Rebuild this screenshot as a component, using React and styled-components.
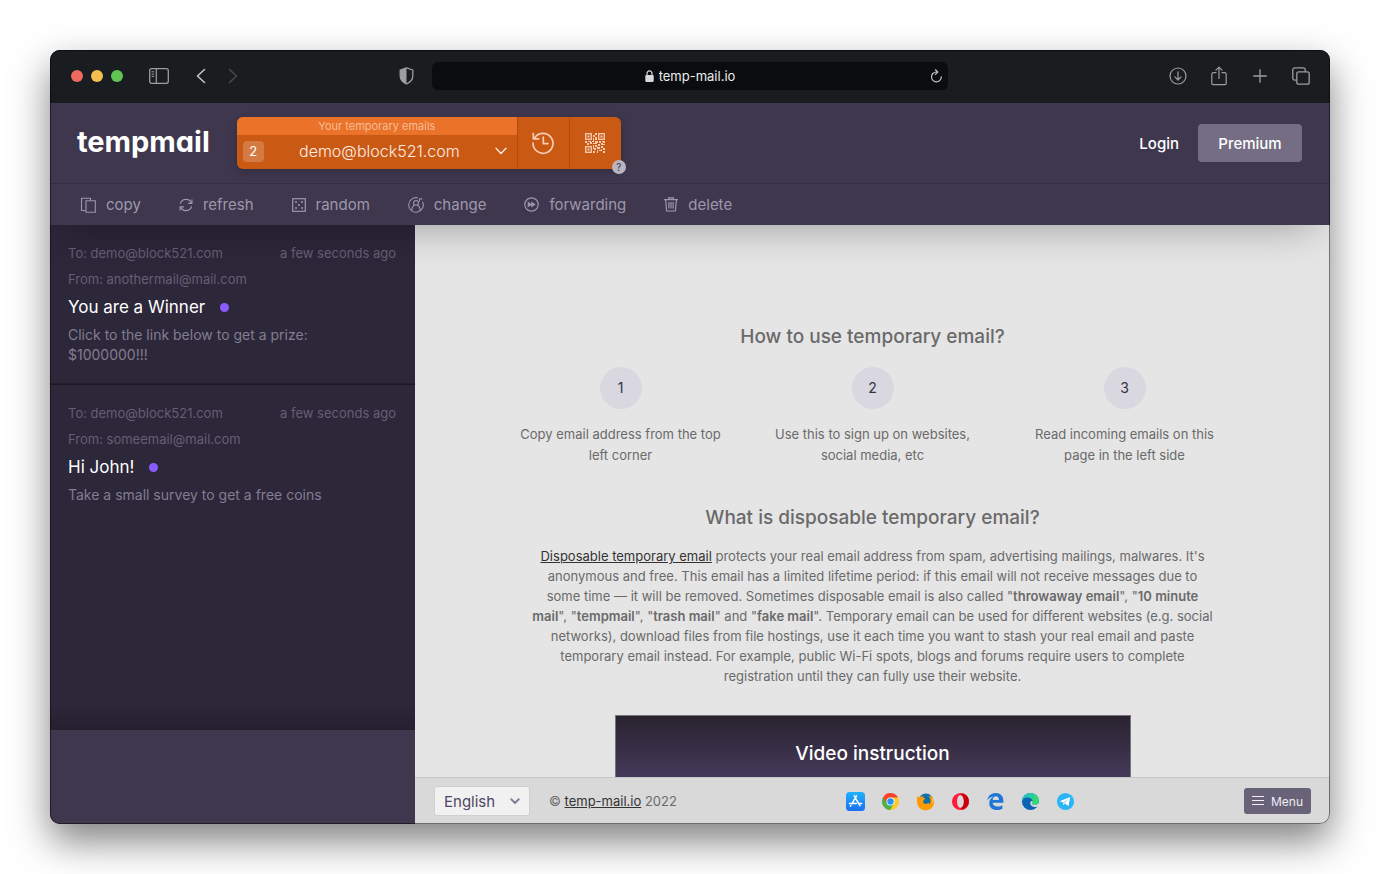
import React, { useState } from "react";
import styled, { createGlobalStyle, css } from "styled-components";

const BAR = "#191d1f";
const PURPLE = "#3e374e";
const DARK = "#2c2739";
const ORANGE = "#ca5914";
const ORANGE_LIGHT = "#ea7229";
const MUTED = "#9d97ac";
const TEXT = "#6a6a6a";

const mails = [
  {
    id: 1,
    to: "demo@block521.com",
    from: "anothermail@mail.com",
    date: "a few seconds ago",
    subject: "You are a Winner",
    body: "Click to the link below to get a prize: $1000000!!!",
  },
  {
    id: 2,
    to: "demo@block521.com",
    from: "someemail@mail.com",
    date: "a few seconds ago",
    subject: "Hi John!",
    body: "Take a small survey to get a free coins",
  },
];

const steps = [
  "Copy email address from the top left corner",
  "Use this to sign up on websites, social media, etc",
  "Read incoming emails on this page in the left side",
];

/* ---------- icons ---------- */

const SidebarIcon = () => (
  <svg width="20" height="16" viewBox="0 0 20 16" fill="none" stroke="currentColor">
    <rect x="0.7" y="0.7" width="18.6" height="14.6" rx="2" strokeWidth="1.3" />
    <path d="M7.3 1v14" strokeWidth="1.2" />
    <path d="M2.6 3.8h2.6M2.6 6.1h2.6M2.6 8.4h2.6" strokeWidth="1" />
  </svg>
);

const ChevronIcon = ({ flip }) => (
  <svg width="10" height="16" viewBox="0 0 10 16" fill="none" stroke="currentColor" strokeWidth="1.6" strokeLinecap="round" strokeLinejoin="round">
    <path d={flip ? "M1.5 1.5 8.5 8l-7 6.5" : "M8.5 1.5 1.5 8l7 6.5"} />
  </svg>
);

const ShieldIcon = () => (
  <svg width="15" height="18" viewBox="0 0 15 18">
    <path d="M7.5.9 1.2 3v6c0 3.6 2.6 6.2 6.3 8 3.7-1.8 6.3-4.4 6.3-8V3L7.5.9Z" fill="none" stroke="currentColor" strokeWidth="1.3" strokeLinejoin="round" />
    <path d="M7.5.9 1.2 3v6c0 3.6 2.6 6.2 6.3 8Z" fill="currentColor" />
  </svg>
);

const LockIcon = () => (
  <svg width="9" height="12" viewBox="0 0 9 12">
    <rect x="0.3" y="5" width="8.4" height="7" rx="1.2" fill="#d6d8d9" />
    <path d="M2 5.3V3.4a2.5 2.6 0 0 1 5 0v1.9" fill="none" stroke="#d6d8d9" strokeWidth="1.2" />
  </svg>
);

const ReloadIcon = () => (
  <svg width="13" height="14" viewBox="0 0 13 14" fill="none" stroke="currentColor" strokeWidth="1.2" strokeLinecap="round" strokeLinejoin="round">
    <path d="M7 3H6.3A4.9 4.9 0 1 0 11.3 7.9" />
    <path d="M5.4.8 7.8 3 5.4 5.4" />
  </svg>
);

const DownloadIcon = () => (
  <svg width="18" height="18" viewBox="0 0 18 18" fill="none" stroke="currentColor" strokeWidth="1.2" strokeLinecap="round" strokeLinejoin="round">
    <circle cx="9" cy="9" r="8" />
    <path d="M9 4.8v8M5.9 9.9 9 13l3.1-3.1" />
  </svg>
);

const ShareIcon = () => (
  <svg width="16" height="20" viewBox="0 0 16 20" fill="none" stroke="currentColor" strokeWidth="1.2" strokeLinecap="round" strokeLinejoin="round">
    <path d="M5 6.7H2.2A1.4 1.4 0 0 0 .8 8.1v9.2a1.4 1.4 0 0 0 1.4 1.4h11.6a1.4 1.4 0 0 0 1.4-1.4V8.1a1.4 1.4 0 0 0-1.4-1.4H11" />
    <path d="M8 12.5V1.2M4.9 4.2 8 1.1l3.1 3.1" />
  </svg>
);

const PlusIcon = () => (
  <svg width="14" height="14" viewBox="0 0 14 14" stroke="currentColor" strokeWidth="1.3" strokeLinecap="round">
    <path d="M7 .7v12.6M.7 7h12.6" />
  </svg>
);

const TabsIcon = () => (
  <svg width="18" height="18" viewBox="0 0 18 18" fill="none" stroke="currentColor" strokeWidth="1.3">
    <rect x="4.8" y="4.8" width="12.4" height="12.4" rx="2" />
    <path d="M4.5 13.2H2.8a2 2 0 0 1-2-2V2.8a2 2 0 0 1 2-2h8.4a2 2 0 0 1 2 2v1.7" />
  </svg>
);

const ArrowDownIcon = () => (
  <svg width="12" height="8" viewBox="0 0 12 8" fill="none" stroke="currentColor" strokeWidth="1.3" strokeLinecap="round" strokeLinejoin="round">
    <path d="M1 1.3 6 6.5l5-5.2" />
  </svg>
);

const SmallArrowIcon = () => (
  <svg width="10" height="7" viewBox="0 0 10 7" fill="none" stroke="currentColor" strokeWidth="2" strokeLinecap="round" strokeLinejoin="round">
    <path d="M1.3 1.3 5 5l3.7-3.7" />
  </svg>
);

const HistoryIcon = () => (
  <svg width="24" height="24" viewBox="0 0 24 24" fill="none" stroke="currentColor" strokeWidth="1.7" strokeLinecap="round" strokeLinejoin="round">
    <path d="M3.4 7.2A10 10 0 1 1 2 12.2" />
    <path d="M2.3 2.4v5.4h5.4" />
    <path d="M12.3 6v6.6h4.6" />
  </svg>
);

const QrIcon = () => (
  <svg width="20" height="20" viewBox="0 0 20 20">
    <g fill="none" stroke="currentColor" strokeWidth="1.3">
      <rect x="0.7" y="0.7" width="5.6" height="5.6" />
      <rect x="13.7" y="0.7" width="5.6" height="5.6" />
      <rect x="0.7" y="13.7" width="5.6" height="5.6" />
    </g>
    <path
      fill="currentColor"
      d="M2.5 2.5h2v2h-2zM15.5 2.5h2v2h-2zM2.5 15.5h2v2h-2zM10 0h2v2h-2zM8 2h2v2H8zM10 4h2v3h-2zM8 5h1v3H8zM0 8h2v2H0zM3 8h3v1H3zM5 9h2v2H5zM2 10h2v2H2zM7 8h2v1H7zM8 10h4v1H8zM10 8h3v2h-3zM14 8h2v2h-2zM17 8h3v1h-3zM16 10h2v2h-2zM18 9h2v1h-2zM13 11h2v2h-2zM10 12h2v2h-2zM8 12h1v4H8zM9 15h2v2H9zM8 18h2v2H8zM12 14h3v2h-3zM16 13h2v2h-2zM18 15h2v2h-2zM14 17h2v1h-2zM12 17h1v3h-1zM16 16h1v2h-1zM18 18h2v2h-2zM18 11h2v1h-2z"
    />
  </svg>
);

const CopyIcon = () => (
  <svg width="16" height="16" viewBox="0 0 16 16" fill="none" stroke="currentColor" strokeWidth="1.1">
    <path d="M5.5 13.5H1.5V1.2h9v2.3" />
    <path d="M6 3.8h9.3v11.4H6Z" />
  </svg>
);

const RefreshIcon = () => (
  <svg width="14" height="14" viewBox="0 0 14 14" fill="none" stroke="currentColor" strokeWidth="1.2" strokeLinejoin="round">
    <path d="M1.5 5.6A5.6 5.2 0 0 1 12.3 5" />
    <path d="M12.9 1.5v3.8H9" />
    <path d="M12.5 8.4A5.6 5.2 0 0 1 1.7 9" />
    <path d="M1.1 12.6V8.8H5" />
  </svg>
);

const DiceIcon = () => (
  <svg width="14" height="14" viewBox="0 0 14 14">
    <rect x="0.7" y="0.7" width="12.6" height="12.6" fill="none" stroke="currentColor" strokeWidth="1.2" />
    <g fill="currentColor">
      <circle cx="4" cy="4" r="1" />
      <circle cx="10" cy="4" r="1" />
      <circle cx="7" cy="7" r="1" />
      <circle cx="4" cy="10" r="1" />
      <circle cx="10" cy="10" r="1" />
    </g>
  </svg>
);

const ChangeIcon = () => (
  <svg width="16" height="16" viewBox="0 0 16 16" fill="none" stroke="currentColor" strokeWidth="1.1">
    <path d="M9.8.9A7.3 7.3 0 1 0 14.5 4.7" />
    <path d="M11.3 4.6l.3-2.8 2.9.2" />
    <circle cx="8" cy="5.9" r="2.4" />
    <path d="M3.8 13.5c.2-3 1.1-4.8 2.7-5.6M12.2 13.5c-.2-3-1.1-4.8-2.7-5.6" />
  </svg>
);

const ForwardIcon = () => (
  <svg width="15" height="15" viewBox="0 0 15 15">
    <circle cx="7.5" cy="7.5" r="6.7" fill="none" stroke="currentColor" strokeWidth="1.2" />
    <path d="M3.7 4.4 7.2 7V4.4l4.5 3.1-4.5 3.1V8l-3.5 2.6Z" fill="currentColor" />
  </svg>
);

const TrashIcon = () => (
  <svg width="14" height="15" viewBox="0 0 14 15" fill="none" stroke="currentColor" strokeWidth="1.2">
    <path d="M0 2.6h14M4.6 2.4V.8h4.8v1.6" />
    <path d="M1.6 2.8 2.6 14h8.8l1-11.2" />
    <path d="M4.9 5v6.5M7 5v6.5M9.1 5v6.5" />
  </svg>
);

const MenuIcon = () => (
  <svg width="12" height="10" viewBox="0 0 12 10" stroke="currentColor" strokeWidth="1">
    <path d="M0 .5h12M0 4.5h12M0 8.5h12" />
  </svg>
);

const AppStoreIcon = () => (
  <svg width="19" height="19" viewBox="0 0 19 19">
    <defs>
      <linearGradient id="store" x1="0" y1="0" x2="0" y2="1">
        <stop offset="0" stopColor="#1fb1fb" />
        <stop offset="1" stopColor="#1d6ff2" />
      </linearGradient>
    </defs>
    <rect width="19" height="19" rx="3.5" fill="url(#store)" />
    <g stroke="#fff" strokeWidth="1.5" strokeLinecap="round">
      <path d="M10.5 3.8 5.8 11.8M8.3 3.8l5.6 9.9M3.4 11.5h7M13 11.5h2.6M4.8 13.6l-.3.6" />
    </g>
  </svg>
);

const ChromeIcon = () => (
  <svg width="19" height="19" viewBox="0 0 20 20">
    <circle cx="10" cy="10" r="9" fill="#ffc926" />
    <path d="M10 10 2.2 5.5A9 9 0 0 0 9.5 19l4.3-7Z" fill="#4caf50" />
    <path d="M2.2 5.5A9 9 0 0 1 17.9 5.8H10L6.2 12.2Z" fill="#f4432f" />
    <circle cx="10" cy="10" r="4.3" fill="#fff" />
    <circle cx="10" cy="10" r="3.4" fill="#2196f3" />
  </svg>
);

const FirefoxIcon = () => (
  <svg width="19" height="19" viewBox="0 0 20 20">
    <circle cx="10.5" cy="9.5" r="8" fill="#0d6fae" />
    <path d="M1.6 4.3c.6.3 1 .8 1.2 1.2C4 4.8 5 4.7 6 5.1c.6-.9 1.4-1.3 2.2-1.4-.6.8-.8 1.5-.6 2.1.5.8 1.9.6 2 1-.1.9-1.3 1.1-1.7 1.8.2 1.2-.2 1.7-.5 2.3 1 1.500 2.800 2.100 4.500 1.200 1.400-.8 2.200-.3 2.300.4-.5 1.400-2.200 2-3.700 1.900 3.600.3 5.600-3.200 4.600-6.500-.4-1.800-1.200-3.200-2.400-4.300 3.200.7 6.400 3.500 6.400 7.600A9 9 0 0 1 1.400 12.500C.7 9.700.9 6.800 1.600 4.300Z" fill="#ff9a05" />
    <path d="M15 3.300c2.600 2.500 3.100 6.400 1.200 9.400 1.600-.8 2.300-2.300 2.400-4-.6-2.600-1.900-4.400-3.600-5.400Z" fill="#ffd54f" />
  </svg>
);

const OperaIcon = () => (
  <svg width="19" height="19" viewBox="0 0 20 20">
    <path fillRule="evenodd" d="M10 1a9 9 0 1 0 0 18 9 9 0 0 0 0-18Zm0 2.2c2 0 3.6 3 3.6 6.8s-1.6 6.8-3.6 6.8S6.4 13.8 6.4 10 8 3.2 10 3.2Z" fill="#ff1b3c" />
    <path d="M10 3.2c.9-1.300 2-1.700 3-1.600a9 9 0 0 1 0 16.800c-1 .1-2.100-.3-3-1.600 2 0 3.600-3 3.600-6.800S12 3.200 10 3.200Z" fill="#c9000b" />
  </svg>
);

const EdgeLegacyIcon = () => (
  <svg width="19" height="19" viewBox="0 0 20 20">
    <path d="M1.3 9C2 4 5.6 1 10.3 1c5 0 8 3.5 8 8.2v2.1H7c.2 2.7 2.5 4 5.2 4 2 0 3.7-.5 5-1.3v3.6c-1.500.9-3.500 1.400-5.800 1.400-4.800 0-8-2.700-8-7.200 0-3.100 1.700-5.700 4.800-7C4.800 5.100 2.700 6.600 1.300 9Zm5.800-.7h6.500c0-2.400-1.100-3.700-3.100-3.700-2 0-3.200 1.500-3.400 3.700Z" fill="#1f75d8" />
  </svg>
);

const EdgeIcon = () => (
  <svg width="19" height="19" viewBox="0 0 20 20">
    <defs>
      <linearGradient id="edge" x1="0" y1="0" x2="1" y2="0.4">
        <stop offset="0" stopColor="#1cb4e0" />
        <stop offset="1" stopColor="#33dd6d" />
      </linearGradient>
    </defs>
    <circle cx="10" cy="10" r="9" fill="#0a63b4" />
    <path d="M1 9.5C1.3 4.6 5 1 10 1c5.3 0 9 3.9 9 8 0 3-2.1 4.5-4.6 4.5-2.1 0-3.4-.8-3-1.700.7-.7 1-1.400.9-2.500C12 7.200 9.600 5.700 7 5.700 4 5.700 2 7.200 1 9.500Z" fill="url(#edge)" />
    <path d="M12.300 9.800c.1.900-.2 1.500-.9 2.100-.4.900.9 1.600 3 1.600 1.900 0 3.500-.8 4.300-2.200L20 15l-2.300.2c-1.700.7-4.200 1-6-.1-1.700-1-2.400-2.900-1.800-4.500.5-1 2.200-1.500 2.400-.8Z" fill="#d9d9d9" />
  </svg>
);

const TelegramIcon = () => (
  <svg width="19" height="19" viewBox="0 0 20 20">
    <circle cx="10" cy="10" r="9" fill="#29b6f6" />
    <path d="M3.8 9.8 15 5.3l-1.9 9.5-3.8-2.6-1.6 1.7-.6-3.1Z" fill="#fff" />
    <path d="m7.1 10.8 6.2-4-4 5.4-1.6 1.7Z" fill="#c4dfec" />
  </svg>
);

const actions = [
  { label: "copy", Icon: CopyIcon },
  { label: "refresh", Icon: RefreshIcon },
  { label: "random", Icon: DiceIcon },
  { label: "change", Icon: ChangeIcon },
  { label: "forwarding", Icon: ForwardIcon },
  { label: "delete", Icon: TrashIcon },
];

const apps = [
  { label: "App Store", Icon: AppStoreIcon },
  { label: "Chrome", Icon: ChromeIcon },
  { label: "Firefox", Icon: FirefoxIcon },
  { label: "Opera", Icon: OperaIcon },
  { label: "Edge Legacy", Icon: EdgeLegacyIcon },
  { label: "Edge", Icon: EdgeIcon },
  { label: "Telegram", Icon: TelegramIcon },
];

/* ---------- sections ---------- */

const BrowserBar = () => {
  const [url, setUrl] = useState("temp-mail.io");
  return (
    <Chrome>
      <ChromeSide>
        <Lights>
          <Light color="#ed6a5e" aria-label="Close window" />
          <Light color="#f5bf4f" aria-label="Minimize window" />
          <Light color="#61c554" aria-label="Zoom window" />
        </Lights>
        <ChromeButton aria-label="Show sidebar"><SidebarIcon /></ChromeButton>
        <NavButtons>
          <ChromeButton bright aria-label="Back"><ChevronIcon /></ChromeButton>
          <ChromeButton dim aria-label="Forward"><ChevronIcon flip /></ChromeButton>
        </NavButtons>
        <ShieldButton aria-label="Privacy report"><ShieldIcon /></ShieldButton>
      </ChromeSide>
      <AddressBar>
        <Address>
          <LockIcon />
          <AddressInput aria-label="Address" value={url} onChange={(e) => setUrl(e.target.value)} />
        </Address>
        <ChromeButton bright aria-label="Reload"><ReloadIcon /></ChromeButton>
      </AddressBar>
      <ChromeTools>
        <ToolIcon aria-label="Downloads"><DownloadIcon /></ToolIcon>
        <ToolIcon aria-label="Share"><ShareIcon /></ToolIcon>
        <ToolIcon aria-label="New tab"><PlusIcon /></ToolIcon>
        <ToolIcon aria-label="Tab overview"><TabsIcon /></ToolIcon>
      </ChromeTools>
    </Chrome>
  );
};

const EmailPicker = () => (
  <Picker>
    <PickerMain>
      <PickerLabel htmlFor="mailbox">Your temporary emails</PickerLabel>
      <PickerRow>
        <PickerCount>2</PickerCount>
        <PickerSelect id="mailbox" defaultValue="demo@block521.com">
          <option>demo@block521.com</option>
        </PickerSelect>
        <ArrowDownIcon />
      </PickerRow>
    </PickerMain>
    <PickerButton aria-label="History"><HistoryIcon /></PickerButton>
    <PickerButton aria-label="QR code"><QrIcon /></PickerButton>
    <Help aria-label="Help">?</Help>
  </Picker>
);

const MailItem = ({ mail }) => (
  <Item>
    <MetaRow>
      <span>To: {mail.to}</span>
      <span>{mail.date}</span>
    </MetaRow>
    <MetaRow>From: {mail.from}</MetaRow>
    <Subject>
      {mail.subject}
      <Unread />
    </Subject>
    <Preview>{mail.body}</Preview>
  </Item>
);

const Article = () => (
  <Content>
    <Title>How to use temporary email?</Title>
    <Steps>
      {steps.map((text, idx) => (
        <Step key={text}>
          <StepNumber>{idx + 1}</StepNumber>
          <StepText>{text}</StepText>
        </Step>
      ))}
    </Steps>
    <Title>What is disposable temporary email?</Title>
    <Paragraph>
      <a href="#disposable">Disposable temporary email</a> protects your real email address from
      spam, advertising mailings, malwares. It's anonymous and free. This email has a limited
      lifetime period: if this email will not receive messages due to some time — it will be
      removed. Sometimes disposable email is also called "<b>throwaway email</b>", "
      <b>10 minute mail</b>", "<b>tempmail</b>", "<b>trash mail</b>" and "<b>fake mail</b>".
      Temporary email can be used for different websites (e.g. social networks), download files
      from file hostings, use it each time you want to stash your real email and paste temporary
      email instead. For example, public Wi-Fi spots, blogs and forums require users to complete
      registration until they can fully use their website.
    </Paragraph>
    <Video>
      <VideoTitle>Video instruction</VideoTitle>
    </Video>
  </Content>
);

const PageFooter = () => (
  <Footer>
    <Language>
      <LanguageSelect aria-label="Language" defaultValue="English">
        <option>English</option>
      </LanguageSelect>
      <SmallArrowIcon />
    </Language>
    <Copyright>
      © <a href="#home">temp-mail.io</a> 2022
    </Copyright>
    <Apps>
      {apps.map(({ label, Icon }) => (
        <a key={label} href="#app" aria-label={label}><Icon /></a>
      ))}
    </Apps>
    <MenuButton><MenuIcon />Menu</MenuButton>
  </Footer>
);

const App = () => (
  <Desktop>
    <GlobalStyle />
    <Window>
      <BrowserBar />
      <TopArea>
        <Header>
          <Logo href="#home">tempmail</Logo>
          <EmailPicker />
          <Account>
            <LoginLink href="#login">Login</LoginLink>
            <PremiumButton>Premium</PremiumButton>
          </Account>
        </Header>
        <Toolbar>
          {actions.map(({ label, Icon }) => (
            <ToolButton key={label}><Icon />{label}</ToolButton>
          ))}
        </Toolbar>
      </TopArea>
      <Body>
        <Sidebar>
          <MailList>
            {mails.map((mail) => (
              <MailItem key={mail.id} mail={mail} />
            ))}
          </MailList>
          <SidebarBottom />
        </Sidebar>
        <Main>
          <Article />
          <PageFooter />
        </Main>
      </Body>
    </Window>
  </Desktop>
);

export default App;

const GlobalStyle = createGlobalStyle`
  * {
    box-sizing: border-box;
  }
  body {
    margin: 0;
    background: #fff;
    font-family: "Inter", "Liberation Sans", sans-serif;
    font-size: 13px;
  }
  button, input, select {
    font: inherit;
    color: inherit;
    border: 0;
    padding: 0;
    margin: 0;
    background: none;
    outline: none;
  }
  button, select {
    cursor: pointer;
  }
  a {
    color: inherit;
  }
  svg {
    display: block;
    flex-shrink: 0;
  }
`
const Desktop = styled.div`
  display: flex;
  height: 100vh;
  padding: 50px;
`
const Window = styled.div`
  position: relative;
  flex: 1;
  min-width: 0;
  display: flex;
  flex-direction: column;
  overflow: hidden;
  border-radius: 10px;
  background: ${PURPLE};
  box-shadow: 0 17px 38px rgba(0, 0, 0, 0.5);
  &::after {
    content: "";
    position: absolute;
    inset: 0;
    z-index: 3;
    border: 1px solid rgba(0, 0, 0, 0.5);
    border-radius: 10px;
    pointer-events: none;
  }
`
// browser bar
const Chrome = styled.div`
  flex-shrink: 0;
  display: grid;
  grid-template-columns: 1fr 516px 1fr;
  align-items: center;
  height: 53px;
  padding-bottom: 1px;
  background: ${BAR};
`
const ChromeSide = styled.div`
  display: flex;
  align-items: center;
  padding: 0 18px 0 21px;
`
const Lights = styled.div`
  display: flex;
  gap: 8px;
  margin-right: 26px;
`
const Light = styled.button.withConfig({ shouldForwardProp: (p) => p !== "color" })`
  width: 12px;
  height: 12px;
  border-radius: 50%;
  background: ${(props) => props.color};
`
const ChromeButton = styled.button.withConfig({
  shouldForwardProp: (p) => !["bright", "dim"].includes(p),
})`
  color: #9b9ea0;
  ${(props) => props.bright && css`
    color: #c3c5c6;
  `}
  ${(props) => props.dim && css`
    color: #46494b;
  `}
`
const NavButtons = styled.div`
  display: flex;
  gap: 22px;
  margin-left: 27px;
`
const ShieldButton = styled(ChromeButton)`
  margin-left: auto;
`
const AddressBar = styled.div`
  display: flex;
  align-items: center;
  height: 28px;
  padding: 0 5px 0 18px;
  border-radius: 6px;
  background: #0a0d0f;
`
const Address = styled.div`
  flex: 1;
  display: flex;
  align-items: center;
  justify-content: center;
  gap: 5px;
`
const AddressInput = styled.input`
  field-sizing: content;
  color: #ececec;
  font-size: 13px;
`
const ChromeTools = styled.div`
  display: flex;
  align-items: center;
  justify-content: flex-end;
  gap: 23px;
  padding-right: 20px;
`
const ToolIcon = styled(ChromeButton)`
  display: flex;
  justify-content: center;
  width: 18px;
`
// purple top area
const TopArea = styled.div`
  position: relative;
  z-index: 2;
  flex-shrink: 0;
  background: ${PURPLE};
  box-shadow: 0 14px 40px -14px rgba(0, 0, 0, 0.35);
`
const Header = styled.header`
  display: flex;
  align-items: center;
  height: 81px;
  padding: 0 28px 0 27px;
  border-bottom: 1px solid #352e43;
`
const Logo = styled.a`
  padding-bottom: 4px;
  color: #fff;
  font-size: 29px;
  font-weight: 700;
  font-feature-settings: "cv11";
  text-decoration: none;
`
const Picker = styled.div`
  position: relative;
  display: flex;
  width: 384px;
  height: 52px;
  margin-left: 27px;
  border-radius: 6px;
  color: #fdeee4;
  background: ${ORANGE};
  box-shadow: 0 3px 10px rgba(0, 0, 0, 0.2);
`
const PickerMain = styled.div`
  flex: 1;
  display: flex;
  flex-direction: column;
`
const PickerLabel = styled.label`
  height: 18px;
  border-radius: 6px 0 0 0;
  background: ${ORANGE_LIGHT};
  color: #f7bd98;
  font-size: 11px;
  line-height: 18px;
  text-align: center;
`
const PickerRow = styled.div`
  flex: 1;
  display: flex;
  align-items: center;
  padding: 0 10px 2px 6px;
`
const PickerCount = styled.span`
  width: 21px;
  height: 21px;
  border-radius: 4px;
  background: #d57a43;
  color: #fff;
  font-size: 13px;
  line-height: 21px;
  text-align: center;
`
const PickerSelect = styled.select`
  flex: 1;
  appearance: none;
  font-size: 16px;
  font-weight: 300;
  text-align: center;
  text-align-last: center;
`
const PickerButton = styled.button`
  display: flex;
  align-items: center;
  justify-content: center;
  width: 52px;
  border-left: 1px solid #b04c10;
  color: #f6cdb3;
`
const Help = styled.button`
  position: absolute;
  right: -5px;
  bottom: -5px;
  width: 14px;
  height: 14px;
  border-radius: 50%;
  background: #b9b4bf;
  color: #3e374e;
  font-size: 10px;
  line-height: 14px;
`
const Account = styled.div`
  display: flex;
  align-items: center;
  gap: 19px;
  margin-left: auto;
  color: #fff;
  font-size: 15px;
  font-weight: 500;
`
const LoginLink = styled.a`
  text-decoration: none;
`
const PremiumButton = styled.button`
  width: 104px;
  height: 38px;
  border-radius: 4px;
  background: #746d84;
`
const Toolbar = styled.nav`
  display: flex;
  align-items: center;
  gap: 38px;
  height: 41px;
  padding: 0 30px;
`
const ToolButton = styled.button`
  display: flex;
  align-items: center;
  gap: 10px;
  color: ${MUTED};
  font-size: 15px;
`
// mail list
const Body = styled.div`
  flex: 1;
  min-height: 0;
  display: flex;
`
const Sidebar = styled.aside`
  flex: 0 0 365px;
  display: flex;
  flex-direction: column;
`
const MailList = styled.div`
  flex: 1;
  overflow: hidden;
  background: linear-gradient(to top, #252030, ${DARK} 26px);
`
const Item = styled.article`
  display: flex;
  flex-direction: column;
  gap: 6px;
  padding: 18px 19px 18px 18px;
  line-height: 20px;
  & + & {
    box-shadow: 0 -1px 0 #1b1723, 0 -2px 0 #231f2e;
    margin-top: 2px;
  }
`
const MetaRow = styled.div`
  display: flex;
  justify-content: space-between;
  color: #655f75;
  font-size: 13px;
`
const Subject = styled.h3`
  display: flex;
  align-items: center;
  gap: 15px;
  margin: 0;
  color: #fff;
  font-size: 17px;
  font-weight: 400;
  line-height: 24px;
`
const Unread = styled.span`
  width: 9px;
  height: 9px;
  border-radius: 50%;
  background: #8a5cff;
`
const Preview = styled.p`
  margin: 0;
  padding-right: 40px;
  color: #837d92;
  font-size: 14px;
`
const SidebarBottom = styled.div`
  height: 94px;
  background: ${PURPLE};
`
// article
const Main = styled.main`
  flex: 1;
  min-width: 0;
  display: flex;
  flex-direction: column;
  background: #e5e5e5;
`
const Content = styled.div`
  flex: 1;
  min-height: 0;
  overflow: hidden;
  display: flex;
  flex-direction: column;
  align-items: center;
  padding: 100px 40px 0;
  color: ${TEXT};
  text-align: center;
`
const Title = styled.h2`
  flex-shrink: 0;
  margin: 0;
  font-size: 19px;
  font-weight: 500;
  line-height: 24px;
`
const Steps = styled.div`
  flex-shrink: 0;
  display: grid;
  grid-template-columns: repeat(3, 1fr);
  width: 100%;
  max-width: 756px;
  margin: 18px 0 40px;
`
const Step = styled.div`
  display: flex;
  flex-direction: column;
  align-items: center;
  gap: 15px;
  padding: 0 24px;
`
const StepNumber = styled.div`
  width: 42px;
  height: 42px;
  border-radius: 50%;
  background: #d9d8e0;
  color: #33304a;
  font-size: 14px;
  line-height: 42px;
`
const StepText = styled.p`
  margin: 0;
  font-size: 13px;
  line-height: 21px;
`
const Paragraph = styled.p`
  flex-shrink: 0;
  width: 100%;
  max-width: 684px;
  margin: 16px 0 29px;
  font-size: 13px;
  line-height: 20px;
  a {
    color: #333;
  }
  b {
    font-weight: 600;
  }
`
const Video = styled.section`
  flex-shrink: 0;
  width: 100%;
  max-width: 516px;
  height: 290px;
  padding-top: 26px;
  border: 1px solid #77727f;
  background: linear-gradient(#29232f, #463a5c 64px);
`
const VideoTitle = styled.h2`
  margin: 0;
  color: #fff;
  font-size: 19px;
  font-weight: 500;
  line-height: 24px;
`
// footer
const Footer = styled.footer`
  flex-shrink: 0;
  display: flex;
  align-items: center;
  height: 47px;
  padding: 0 19px;
  border-top: 1px solid #c6c6c6;
  background: #d9d9d9;
`
const Language = styled.div`
  display: grid;
  align-items: center;
  width: 96px;
  height: 30px;
  border: 1px solid #cfcfcf;
  border-radius: 3px;
  background: #f1f1f1;
  color: #8480a0;
  > * {
    grid-area: 1 / 1;
  }
  > svg {
    justify-self: end;
    margin-right: 9px;
    pointer-events: none;
  }
`
const LanguageSelect = styled.select`
  appearance: none;
  height: 28px;
  padding-left: 9px;
  color: #4e4765;
  font-size: 15px;
`
const Copyright = styled.div`
  margin-left: 19px;
  color: ${TEXT};
  font-size: 13px;
  a {
    color: #333;
  }
`
const Apps = styled.div`
  display: flex;
  gap: 16px;
  margin: 0 auto;
`
const MenuButton = styled.button`
  display: flex;
  align-items: center;
  justify-content: center;
  gap: 7px;
  width: 67px;
  height: 26px;
  border-radius: 3px;
  background: #696379;
  color: #f0eef3;
  font-size: 12px;
`
